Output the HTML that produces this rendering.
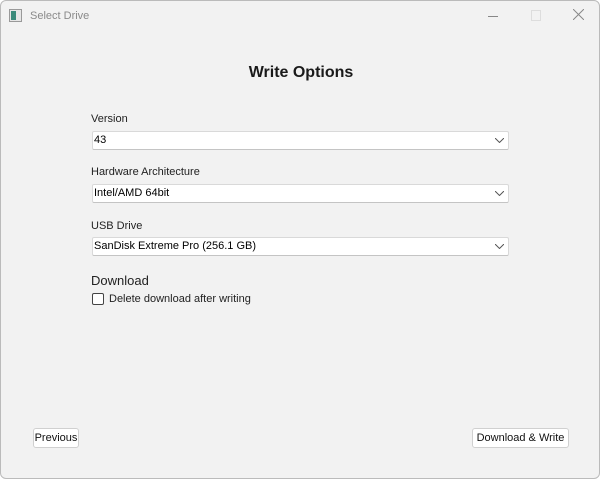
<!DOCTYPE html>
<html><head><style>
body{margin:0;width:600px;height:479px;overflow:hidden;background:#fff;font-family:"Liberation Sans",sans-serif;}
.win{position:absolute;left:0;top:0;width:598px;height:477px;border:1px solid #bbb;border-radius:6px;background:#f2f2f2;}
.t{position:absolute;font-size:11px;color:#222;}
.combo{position:absolute;left:91px;width:415px;height:17px;background:#fff;border:1px solid #d9d9d9;border-bottom-color:#c4c4c4;border-radius:2px;font-size:11px;line-height:17px;}
.combo span{margin-left:1px;}
.combo svg{position:absolute;right:4px;top:6px;}
.btn{position:absolute;height:18px;background:#fff;border:1px solid #d0d0d0;border-radius:3px;font-size:11px;line-height:18px;text-align:center;color:#111;}
</style></head><body>
<div class="win">
<div style="position:absolute;left:8px;top:8px;width:11px;height:11px;border:1px solid #999;background:#e6e6e6"><div style="position:absolute;left:1px;top:1px;width:5px;height:9px;background:#3a8a7a"></div></div>
<div class="t" style="left:29px;top:9px;color:#8a8a8a;font-size:11px">Select Drive</div>
<div style="position:absolute;left:487px;top:15px;width:10px;height:1px;background:#888"></div>
<div style="position:absolute;left:530px;top:9px;width:8px;height:9px;border:1px solid #ddd"></div>
<svg style="position:absolute;left:572px;top:8px" width="11" height="11"><path d="M0 0L11 11M11 0L0 11" stroke="#888" stroke-width="1"/></svg>
<div style="position:absolute;left:0;width:600px;top:63px;text-align:center;font-weight:bold;font-size:16px;color:#1a1a1a">Write Options</div>
<div class="t" style="left:90px;top:112px">Version</div>
<div class="combo" style="top:130px"><span>43</span><svg width="9" height="5"><path d="M0 0L4.5 4.5L9 0" fill="none" stroke="#555"/></svg></div>
<div class="t" style="left:90px;top:165px">Hardware Architecture</div>
<div class="combo" style="top:183px"><span>Intel/AMD 64bit</span><svg width="9" height="5"><path d="M0 0L4.5 4.5L9 0" fill="none" stroke="#555"/></svg></div>
<div class="t" style="left:90px;top:219px">USB Drive</div>
<div class="combo" style="top:236px"><span>SanDisk Extreme Pro (256.1 GB)</span><svg width="9" height="5"><path d="M0 0L4.5 4.5L9 0" fill="none" stroke="#555"/></svg></div>
<div class="t" style="left:90px;top:272px;font-size:13px">Download</div>
<div style="position:absolute;left:91px;top:292px;width:10px;height:10px;border:1px solid #444;border-radius:2px;background:#fff"></div>
<div class="t" style="left:108px;top:292px">Delete download after writing</div>
<div class="btn" style="left:32px;top:427px;width:44px">Previous</div>
<div class="btn" style="left:471px;top:427px;width:95px">Download &amp; Write</div>
</div>
</body></html>
